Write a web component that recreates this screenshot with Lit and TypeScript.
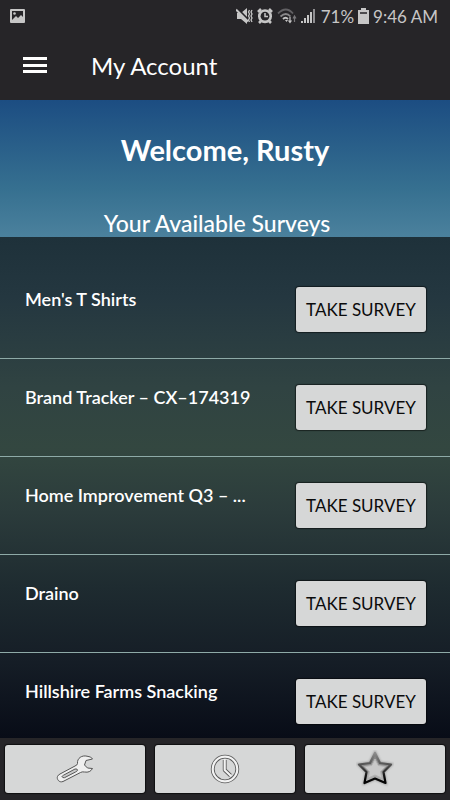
import { LitElement, html, css, svg } from "lit";
import { customElement, property } from "lit/decorators.js";

const surveys = [
  "Men's T Shirts",
  "Brand Tracker – CX–174319",
  "Home Improvement Q3 – ...",
  "Draino",
  "Hillshire Farms Snacking",
];

@customElement("status-bar")
class StatusBar extends LitElement {
  static styles = css`
    :host {
      display: flex;
      align-items: center;
      justify-content: space-between;
      height: 32px;
      padding: 0 12px 0 10px;
      color: #c6c6c6;
      font-size: 17px;
    }
    .right {
      display: flex;
      align-items: center;
      gap: 4px;
    }
    svg {
      display: block;
    }
  `;

  render() {
    return html`
      <svg width="15" height="15" viewBox="0 0 15 15" aria-hidden="true">
        <rect width="15" height="14" rx="1" fill="#c6c6c6" />
        <path d="M2 2h11v6l-2-2-3 3-2-2-4 4z" fill="#262528" />
        <circle cx="4.5" cy="4.5" r="1.3" fill="#c6c6c6" />
      </svg>
      <div class="right">
        <svg width="17" height="16" viewBox="0 0 17 16" aria-hidden="true">
          <path d="M1 5h4l6-5v16l-6-5H1z" fill="#c6c6c6" />
          <path d="M1 1l13 13" stroke="#262528" stroke-width="3" />
          <path d="M0 1.500l12 12" stroke="#c6c6c6" stroke-width="2" />
          <path d="M13.500 2l-1 2 1 2-1 2 1 2-1 2 1 2M16 2l-1 2 1 2-1 2 1 2-1 2 1 2" fill="none" stroke="#c6c6c6" stroke-width="1.300" />
        </svg>
        <svg width="16" height="16" viewBox="0 0 16 16" aria-hidden="true">
          <circle cx="8" cy="8.200" r="7" fill="#c6c6c6" />
          <path d="M1 4l3-3M12 1l3 3M4 13l-2 2M12 13l2 2" stroke="#c6c6c6" stroke-width="2.600" />
          <circle cx="8" cy="8.200" r="4.400" fill="#262528" />
          <path d="M8 5v3.500h3" fill="none" stroke="#c6c6c6" stroke-width="1.500" />
        </svg>
        <svg width="20" height="16" viewBox="0 0 20 16" aria-hidden="true">
          <g fill="none" stroke-width="1.800">
            <path d="M1 5.500q8-8 15 0" stroke="#626164" />
            <path d="M3.500 8.500q5.500-5 10 0" stroke="#89888a" />
            <path d="M6 11q2.500-2.500 5 0" stroke="#c6c6c6" />
          </g>
          <path d="M8 12h3l-1.500 2z" fill="#c6c6c6" />
          <path d="M13 9v5M11.500 12.500l1.500 2 1.500-2" fill="none" stroke="#c6c6c6" stroke-width="1.200" />
          <path d="M17.500 14V9M16 10.500L17.500 8l1.500 2.500" fill="none" stroke="#777679" stroke-width="1.200" />
        </svg>
        <svg width="16" height="16" viewBox="0 0 16 16" aria-hidden="true">
          <path d="M0 13h2v2H0zM3 10h2v5H3zM6 7h2v8H6zM9 4h2v11H9z" fill="#c6c6c6" />
          <path d="M12 1h2v14h-2z" fill="#8f8e91" />
        </svg>
        <span>71%</span>
        <svg width="11" height="16" viewBox="0 0 11 16" aria-hidden="true">
          <path d="M3 0h5v2h3v14H0V2h3z" fill="#c6c6c6" />
          <path d="M2 4h7v2H2z" fill="#4c4b4e" />
        </svg>
        <span>9:46 AM</span>
      </div>
    `;
  }
}

@customElement("survey-row")
class SurveyRow extends LitElement {
  @property() name = "";

  static styles = css`
    :host {
      display: flex;
      justify-content: space-between;
      align-items: flex-start;
      box-sizing: border-box;
      height: 98px;
      padding: 26px 24px 0 25px;
      border-bottom: 1px solid #8eaaa7;
    }
    .name {
      margin: 0;
      font-size: 18px;
      line-height: 24px;
      font-weight: 600;
      white-space: nowrap;
    }
    .take {
      width: 130px;
      height: 45px;
      padding: 0;
      border: 0;
      border-radius: 3px;
      background: #d6d7d7;
      color: #0b0b0b;
      font: 17px/24px Lato, sans-serif;
      box-shadow: 0 0 1px 1px rgba(0, 0, 0, 0.5);
      white-space: nowrap;
    }
  `;

  render() {
    return html`
      <h3 class="name">${this.name}</h3>
      <button class="take" type="button">TAKE SURVEY</button>
    `;
  }
}

const wrench = svg`
  <svg width="38" height="30" viewBox="0 0 38 30" aria-hidden="true">
    <path d="M21.500 9.500C21 4 26 1 31 2.200Q35.500 2.500 36.500 5L30 6.500 28.500 11 31.500 14 36.500 14.500Q34 19 28.500 18Q26 17.500 24.500 18.500L7 27.500C3 29 .5 25 1.500 22.500Q2 21 4 20L19 12Q21.500 11 21.500 9.500Z" fill="#efefef" stroke="#555" stroke-width="1" />
    <path d="M7.500 21.200L19 15Q21.500 14.500 21.500 16.200 21 17.500 19.500 18L8.500 23.700Q6.500 24 6 22.700 6 22 7.500 21.200Z" fill="#c8c9c9" stroke="#555" stroke-width="1" />
  </svg>`;

const clock = svg`
  <svg width="30" height="30" viewBox="0 0 30 30" aria-hidden="true">
    <circle cx="15" cy="15" r="12.300" fill="none" stroke="#555" stroke-width="3.800" />
    <path d="M14.700 6V16L20.500 21.500" fill="none" stroke="#555" stroke-width="3.800" stroke-linejoin="round" />
    <circle cx="15" cy="15" r="12.300" fill="none" stroke="#f3f3f3" stroke-width="2.200" />
    <path d="M14.700 6V16L20.500 21.500" fill="none" stroke="#f3f3f3" stroke-width="2.200" stroke-linecap="round" stroke-linejoin="round" />
  </svg>`;

const star = svg`
  <svg width="38" height="38" viewBox="0 0 38 38" aria-hidden="true">
    <defs>
      <linearGradient id="edge" x1="0" y1="0" x2="0" y2="1">
        <stop offset="0" stop-color="#8c8c8c" />
        <stop offset=".45" stop-color="#4a4a4a" />
        <stop offset=".85" stop-color="#050505" />
      </linearGradient>
      <linearGradient id="face" x1="0" y1="0" x2="0" y2="1">
        <stop offset="0" stop-color="#808080" />
        <stop offset=".5" stop-color="#929292" />
        <stop offset="1" stop-color="#b8b8b8" />
      </linearGradient>
      <filter id="glow" x="-20%" y="-20%" width="140%" height="140%">
        <feGaussianBlur stdDeviation="1" />
      </filter>
    </defs>
    <path d="M19 3L24 13 35 14.500 27.500 22 29.500 33 19 28.500 8.500 33 10.500 22 3 14.500 14 13Z" fill="#777" stroke="#777" stroke-width="3" filter="url(#glow)" opacity=".6" />
    <path d="M19 3L24 13 35 14.500 27.500 22 29.500 33 19 28.500 8.500 33 10.500 22 3 14.500 14 13Z" fill="url(#face)" stroke="url(#edge)" stroke-width="2.200" stroke-linejoin="round" />
    <path d="M19 9L22.300 15.500 29.500 16.500 24.500 21.500 25.800 28 19 25 12.200 28 13.500 21.500 8.500 16.500 15.700 15.500Z" fill="#c9c9c9" stroke="#b4b4b4" stroke-width="1" />
  </svg>`;

@customElement("app-root")
class AppRoot extends LitElement {
  static styles = css`
    :host {
      display: flex;
      flex-direction: column;
      height: 100vh;
      overflow: hidden;
      background: #262528;
      color: #fff;
      font-family: Lato, sans-serif;
    }
    status-bar,
    .toolbar,
    .hero,
    .tabs {
      flex: none;
    }
    .toolbar {
      display: flex;
      align-items: center;
      gap: 44px;
      height: 68px;
      padding: 0 23px;
      box-sizing: border-box;
    }
    .menu {
      width: 24px;
      height: 24px;
      padding: 0;
      border: 0;
      background: none;
    }
    .menu svg {
      display: block;
    }
    .title {
      margin: 0;
      font-size: 24px;
      line-height: 32px;
      font-weight: 400;
    }
    .hero {
      display: flex;
      flex-direction: column;
      justify-content: space-between;
      box-sizing: border-box;
      height: 137px;
      padding-top: 30px;
      background: linear-gradient(#1c4d82, #367090 65%, #4b819d);
      text-align: center;
    }
    .welcome {
      margin: 0;
      font-size: 29px;
      line-height: 40px;
      font-weight: 700;
    }
    .subtitle {
      margin: 0;
      padding-right: 16px;
      font-size: 23px;
      line-height: 28px;
      font-weight: 500;
    }
    .list {
      flex: 1;
      min-height: 0;
      overflow: hidden;
      margin: 0;
      padding: 24px 0 0;
      list-style: none;
      background: linear-gradient(
        #1e313a 0%,
        #243740 12%,
        #304342 30%,
        #334740 42%,
        #2b3b3b 55%,
        #1e2b30 70%,
        #151d26 85%,
        #080c17 100%
      );
    }
    .tabs {
      display: grid;
      grid-template-columns: repeat(3, 1fr);
      gap: 10px;
      padding: 7px 5px;
    }
    .tab {
      display: flex;
      align-items: center;
      justify-content: center;
      height: 48px;
      padding: 0;
      border: 0;
      border-radius: 3px;
      background: #d6d7d7;
      box-shadow: 0 0 1px 1px rgba(0, 0, 0, 0.6);
    }
  `;

  render() {
    return html`
      <status-bar></status-bar>
      <header class="toolbar">
        <button class="menu" type="button" aria-label="Menu">
          <svg width="24" height="24" viewBox="0 0 24 24" aria-hidden="true">
            <path d="M0 3h24v3H0zM0 10h24v3H0zM0 16h24v3H0z" fill="#fff" />
          </svg>
        </button>
        <h1 class="title">My Account</h1>
      </header>
      <section class="hero">
        <p class="welcome">Welcome, Rusty</p>
        <h2 class="subtitle">Your Available Surveys</h2>
      </section>
      <ul class="list">
        ${surveys.map((name) => html`<li><survey-row .name=${name}></survey-row></li>`)}
      </ul>
      <nav class="tabs">
        <button class="tab" type="button" aria-label="Settings">${wrench}</button>
        <button class="tab" type="button" aria-label="History">${clock}</button>
        <button class="tab" type="button" aria-label="Rewards">${star}</button>
      </nav>
    `;
  }
}
